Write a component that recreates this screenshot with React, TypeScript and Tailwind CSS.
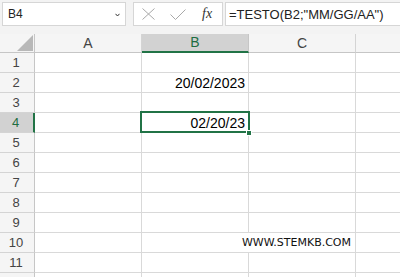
import React from "react";

const GREEN = "#217346";

function RowHeader({ n }: { n: number }) {
  const sel = n === 4;
  return (
    <div
      className={
        "w-[35px] shrink-0 h-full flex items-center justify-center text-[13px] border-b border-[#d4d4d4] " +
        (sel
          ? "bg-[#d2d2d2] text-[#1e6e42] border-r-2 border-r-[#217346]"
          : "bg-[#f5f5f5] text-[#444] border-r border-r-[#c6c6c6]")
      }
    >
      {n <= 11 && <span className="pr-[2px]">{n}</span>}
    </div>
  );
}

function Cell({
  children,
  w,
  noRight,
  dejavu,
}: {
  children?: React.ReactNode;
  w?: string;
  noRight?: boolean;
  dejavu?: boolean;
}) {
  return (
    <div
      className={
        (w ? w + " shrink-0 " : "flex-1 ") +
        "h-full flex items-center justify-end border-b border-[#d9d9d9] " +
        (noRight ? "" : "border-r ") +
        (dejavu ? "pr-[4px] " : "pr-[3px] ")
      }
    >
      {children !== undefined && (
        <span
          className={
            "shrink-0 whitespace-nowrap leading-[20px] " +
            (dejavu ? "text-[11px] text-[#111]" : "text-[14px] text-black")
          }
          style={dejavu ? { fontFamily: '"DejaVu Sans", sans-serif' } : undefined}
        >
          {children}
        </span>
      )}
    </div>
  );
}

export default function App() {
  const rows = [1, 2, 3, 4, 5, 6, 7, 8, 9, 10, 11, 12];
  return (
    <div
      className="w-[400px] h-[277px] overflow-hidden bg-white relative"
      style={{ fontFamily: '"Liberation Sans", Arial, sans-serif' }}
    >
      {/* top bar */}
      <div className="h-[34px] bg-[#f3f3f3] flex items-start pt-[2px] pl-[2px]">
        <div className="w-[124px] h-[24px] bg-white border border-[#d6d6d6] flex items-center justify-between pl-[5px] pr-[5px]">
          <span className="text-[12px] text-[#222] leading-none">B4</span>
          <svg width="5" height="4" viewBox="0 0 5 4" className="mt-[1px]">
            <polyline points="0.5,0.8 2.5,3 4.5,0.8" fill="none" stroke="#333" strokeWidth="1" />
          </svg>
        </div>
        <div className="ml-[7px] w-[90px] h-[24px] bg-white border border-[#d6d6d6] flex items-center pl-[8px]">
          <svg width="13" height="12" viewBox="0 0 13 12">
            <line x1="0.5" y1="0.5" x2="12.5" y2="11.5" stroke="#a8a8a8" strokeWidth="1" />
            <line x1="12.5" y1="0.5" x2="0.5" y2="11.5" stroke="#a8a8a8" strokeWidth="1" />
          </svg>
          <svg width="16" height="11" viewBox="0 0 16 11" className="ml-[15px]">
            <polyline points="0.5,5.5 5.5,10.5 15.5,0.5" fill="none" stroke="#a8a8a8" strokeWidth="1" />
          </svg>
          <span
            className="ml-[16px] text-[14px] italic text-[#333] leading-none"
            style={{ fontFamily: '"Liberation Serif", "Times New Roman", serif' }}
          >
            fx
          </span>
        </div>
        <div className="ml-[2px] flex-1 h-[24px] bg-white border border-[#d6d6d6] border-r-0 flex items-center pl-[3px]">
          <span className="text-[13px] text-[#222] leading-none whitespace-nowrap">=TESTO(B2;"MM/GG/AA")</span>
        </div>
      </div>

      {/* column headers */}
      <div className="h-[19px] flex">
        <div className="w-[35px] shrink-0 h-full bg-[#f5f5f5] border-r border-b border-[#c6c6c6] flex items-end justify-end pr-[1px] pb-[1px]">
          <svg width="16" height="16" viewBox="0 0 16 16">
            <polygon points="16,0 16,16 0,16" fill="#b8b8b8" />
          </svg>
        </div>
        <div className="w-[107px] shrink-0 h-full bg-[#f5f5f5] border-r border-r-[#d4d4d4] border-b border-b-[#c6c6c6] flex items-center justify-center text-[14px] text-[#444]">
          A
        </div>
        <div className="w-[107px] shrink-0 h-full bg-[#d2d2d2] border-r border-r-[#c6c6c6] border-b-2 border-b-[#217346] flex items-center justify-center text-[14px] text-[#1e6e42]">
          B
        </div>
        <div className="w-[107px] shrink-0 h-full bg-[#f5f5f5] border-r border-r-[#d4d4d4] border-b border-b-[#c6c6c6] flex items-center justify-center text-[14px] text-[#444]">
          C
        </div>
        <div className="flex-1 h-full bg-[#f5f5f5] border-b border-b-[#c6c6c6]" />
      </div>

      {/* rows */}
      {rows.map((n) => (
        <div key={n} className="h-[20px] flex">
          <RowHeader n={n} />
          <Cell w="w-[107px]" />
          <Cell w="w-[107px]" noRight={n === 10}>
            {n === 2 ? "20/02/2023" : n === 4 ? "02/20/23" : undefined}
          </Cell>
          <Cell w="w-[107px]" dejavu={n === 10}>
            {n === 10 ? "WWW.STEMKB.COM" : undefined}
          </Cell>
          <Cell noRight />
        </div>
      ))}

      {/* active cell outline */}
      <div className="absolute left-[140px] top-[111px] w-[110px] h-[22px] border-2 border-[#217346]" />
      <div
        className="absolute left-[246px] top-[130px] w-[6px] h-[6px] border border-white"
        style={{ backgroundColor: GREEN }}
      />
    </div>
  );
}
